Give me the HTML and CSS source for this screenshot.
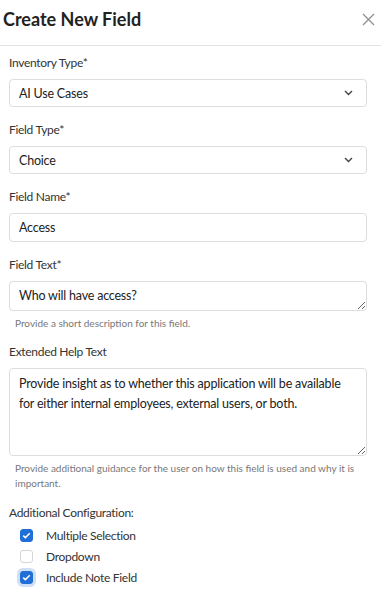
FILE: index.html
```html
<!DOCTYPE html>
<html>
<head>
<meta charset="utf-8">
<link rel="stylesheet" href="styles.css">
</head>
<body>
<div class="modal">
  <div class="header">
    <h1 class="title">Create New Field</h1>
    <button class="close" aria-label="Close">
      <svg width="13" height="13" viewBox="0 0 13 13"><path d="M1 1L12 12M12 1L1 12" stroke="#8f8f8f" stroke-width="1.3" fill="none"/></svg>
    </button>
  </div>
  <div class="body">
    <div class="field">
      <label class="label">Inventory Type*</label>
      <div class="control select"><span>AI Use Cases</span>
        <svg class="chev" width="9" height="6" viewBox="0 0 9 6"><path d="M1 1L4.5 4.5L8 1" stroke="#444" stroke-width="1.4" fill="none"/></svg>
      </div>
    </div>
    <div class="field">
      <label class="label">Field Type*</label>
      <div class="control select"><span>Choice</span>
        <svg class="chev" width="9" height="6" viewBox="0 0 9 6"><path d="M1 1L4.5 4.5L8 1" stroke="#444" stroke-width="1.4" fill="none"/></svg>
      </div>
    </div>
    <div class="field">
      <label class="label">Field Name*</label>
      <input class="control input" type="text" value="Access">
    </div>
    <div class="field">
      <label class="label">Field Text*</label>
      <textarea class="control ta ta-short">Who will have access?</textarea>
      <div class="help">Provide a short description for this field.</div>
    </div>
    <div class="field">
      <label class="label">Extended Help Text</label>
      <textarea class="control ta ta-long">Provide insight as to whether this application will be available for either internal employees, external users, or both.</textarea>
      <div class="help help-2">Provide additional guidance for the user on how this field is used and why it is important.</div>
    </div>
    <div class="config">
      <div class="label">Additional Configuration:</div>
      <div class="check-row"><span class="box checked"><svg width="9" height="7" viewBox="0 0 9 7"><path d="M1.2 3.6L3.4 5.6L7.8 1.3" stroke="#fff" stroke-width="1.5" fill="none"/></svg></span><span>Multiple Selection</span></div>
      <div class="check-row"><span class="box"></span><span>Dropdown</span></div>
      <div class="check-row"><span class="box checked focus"><svg width="9" height="7" viewBox="0 0 9 7"><path d="M1.2 3.6L3.4 5.6L7.8 1.3" stroke="#fff" stroke-width="1.5" fill="none"/></svg></span><span>Include Note Field</span></div>
    </div>
  </div>
</div>
</body>
</html>
```

FILE: styles.css
```css
* { box-sizing: border-box; }
html, body { margin: 0; padding: 0; background: #fff; }
body {
  font-family: Lato, "Open Sans", sans-serif;
  color: #2b2b2b;
  width: 381px;
  height: 596px;
  overflow: hidden;
}
.header {
  display: flex;
  align-items: center;
  justify-content: space-between;
  height: 46px;
  padding: 0 6px 8px 3px;
  border-bottom: 1px solid #e3e3e3;
}
.title {
  margin: 0;
  font-size: 18px;
  font-weight: 700;
  color: #222;
}
.close {
  border: 0;
  background: none;
  padding: 0;
  width: 13px;
  height: 13px;
  display: flex;
  margin-top: 2px;
}
.body {
  padding: 9px 14px 0 9px;
}
.field { margin-bottom: 15px; display: flex; flex-direction: column; }
.label {
  display: block;
  font-size: 12px;
  letter-spacing: -0.3px;
  line-height: 16px;
  margin-bottom: 8px;
  color: #333;
}
.control {
  width: 358px;
  border: 1px solid #dddddd;
  border-radius: 4px;
  font-family: inherit;
  font-size: 12.5px;
  letter-spacing: -0.2px;
  color: #222;
  background: #fff;
  padding: 0 9px;
  margin: 0;
  outline: none;
}
.select {
  height: 28px;
  display: flex;
  align-items: center;
  justify-content: space-between;
  padding-right: 13px;
}
.input { height: 29px; }
.ta {
  display: block;
  resize: vertical;
  line-height: 20px;
  padding-top: 5px;
}
.ta-short { height: 30px; overflow: hidden; padding-top: 4px; }
.ta-long { height: 88px; }
.help {
  font-size: 10px;
  line-height: 14px;
  color: #777;
  margin: 5px 0 0 6px;
}
.help-2 { line-height: 15px; }
.field:has(.help) { margin-bottom: 14px; }
.config .label { margin-bottom: 4px; }
.check-row {
  display: flex;
  align-items: center;
  height: 21px;
  padding-left: 11px;
  font-size: 12px;
  letter-spacing: -0.3px;
  color: #333;
}
.box {
  width: 13px;
  height: 13px;
  border: 1px solid #d6d6d6;
  border-radius: 3px;
  margin-right: 13px;
  display: flex;
  align-items: center;
  justify-content: center;
  background: #fff;
}
.box.checked { background: #1f6fd6; border-color: #1f6fd6; }
.box.focus { box-shadow: 0 0 0 3px rgba(31, 111, 214, 0.22); }
```
